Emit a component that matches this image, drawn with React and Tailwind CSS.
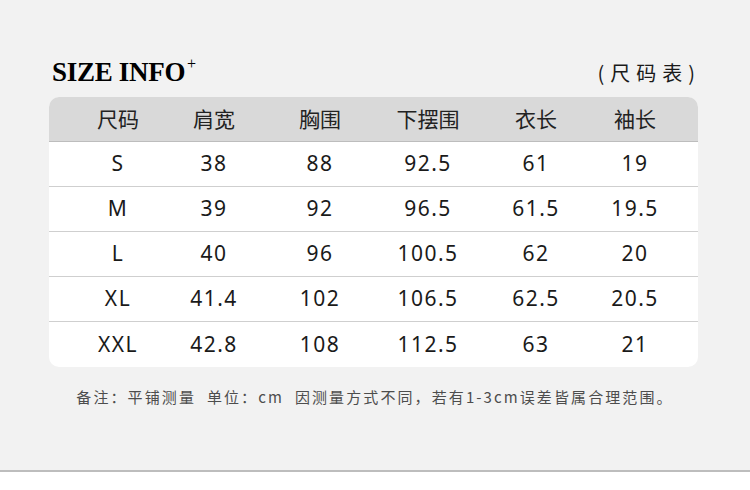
import React from "react";

const columns = ["尺码", "肩宽", "胸围", "下摆围", "衣长", "袖长"];
const rows = [
  ["S", "38", "88", "92.5", "61", "19"],
  ["M", "39", "92", "96.5", "61.5", "19.5"],
  ["L", "40", "96", "100.5", "62", "20"],
  ["XL", "41.4", "102", "106.5", "62.5", "20.5"],
  ["XXL", "42.8", "108", "112.5", "63", "21"],
];

const grid = "grid grid-cols-[96px_96px_116px_100px_116px_82px] pl-[21px]";

function SizeTable() {
  return (
    <div className="w-[649px] rounded-[10px] overflow-hidden bg-white">
      <div className={`${grid} h-[45px] items-center bg-[#d9d9d9] border-b border-[#bdbdbd] text-[21px] text-[#222]`} style={{ fontFamily: '"Noto Sans CJK SC", sans-serif' }}>
        {columns.map(c => (
          <div key={c} className="text-center">{c}</div>
        ))}
      </div>
      {rows.map((r, i) => (
        <div
          key={r[0]}
          className={`${grid} h-[45px] items-center text-[21px] tracking-[1.5px] text-[#1a1a1a] ${i < rows.length - 1 ? "border-b border-[#cfcfcf]" : ""}`}
          style={{ fontFamily: '"Noto Sans", sans-serif' }}
        >
          {r.map((v, j) => (
            <div key={`${r[0]}_${j}`} className="text-center">{v}</div>
          ))}
        </div>
      ))}
    </div>
  );
}

export default function App() {
  return (
    <div className="w-[750px] h-[490px] bg-white">
      <div className="h-[472px] bg-[#f2f2f2] border-b-2 border-[#bdbdbd] pt-[55px] pl-[49px]">
        <div className="w-[649px] h-[35px] flex items-center justify-between pl-[3px] pr-[3px] mb-[7px]">
          <div className="flex items-start text-black" style={{ fontFamily: '"Liberation Serif", serif' }}>
            <span className="text-[27px] font-bold leading-none tracking-[-0.3px]">SIZE INFO</span>
            <span className="text-[16px] leading-none -mt-[3px] ml-[2px]">+</span>
          </div>
          <div className="text-[20px] tracking-[6px] -mr-[6px] text-[#1a1a1a] leading-none" style={{ fontFamily: '"Noto Sans CJK SC", sans-serif' }}>
            (尺码表)
          </div>
        </div>
        <SizeTable />
        <p
          className="mt-[20px] -ml-[49px] w-[750px] text-center text-[15px] leading-[20px] tracking-[2.1px] text-[#4d4d4d]"
          style={{ fontFamily: '"Noto Sans CJK SC", sans-serif' }}
        >
          备注：平铺测量&nbsp;&nbsp;单位：cm&nbsp;&nbsp;因测量方式不同，若有1-3cm误差皆属合理范围。
        </p>
      </div>
    </div>
  );
}
